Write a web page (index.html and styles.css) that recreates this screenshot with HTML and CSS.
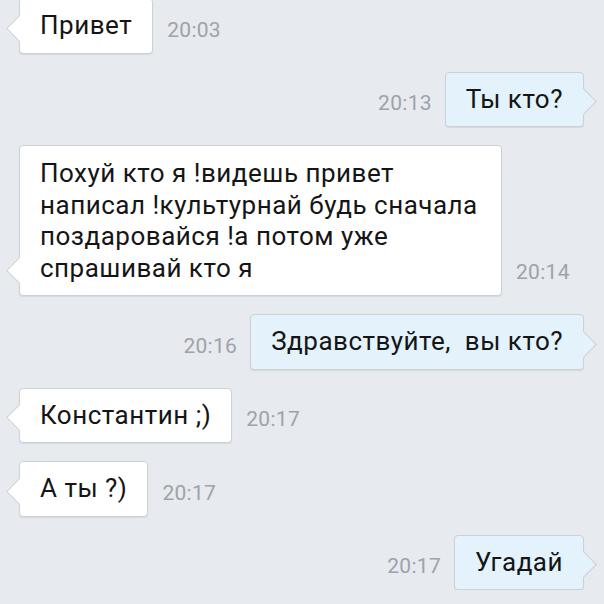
FILE: index.html
```html
<!DOCTYPE html>
<html lang="ru">
<head>
    <meta charset="UTF-8">
    <title>Диалог</title>
    <link rel="stylesheet" href="styles.css">
</head>
<body>
    <div class="chat">
        <div class="row in">
            <div class="bubble">Привет</div>
            <span class="time">20:03</span>
        </div>
        <div class="row out">
            <span class="time">20:13</span>
            <div class="bubble">Ты кто?</div>
        </div>
        <div class="row in">
            <div class="bubble wide">Похуй кто я !видешь привет<br>написал !культурнай будь сначала<br>поздаровайся !а потом уже<br>спрашивай кто я</div>
            <span class="time">20:14</span>
        </div>
        <div class="row out">
            <span class="time">20:16</span>
            <div class="bubble">Здравствуйте,&nbsp; вы кто?</div>
        </div>
        <div class="row in">
            <div class="bubble">Константин ;)</div>
            <span class="time">20:17</span>
        </div>
        <div class="row in">
            <div class="bubble">А ты ?)</div>
            <span class="time">20:17</span>
        </div>
        <div class="row out">
            <span class="time">20:17</span>
            <div class="bubble">Угадай</div>
        </div>
    </div>
</body>
</html>
```

FILE: styles.css
```css
* {
    margin: 0;
    padding: 0;
    box-sizing: border-box;
}
body {
    background: #e7eaee;
    font-family: Roboto, "Noto Sans", sans-serif;
    overflow: hidden;
}
.chat {
    display: flex;
    flex-direction: column;
    gap: 18px;
    margin-top: -2px;
    padding: 0 20px 0 19px;
}
.row {
    display: flex;
    align-items: flex-end;
    gap: 14px;
}
.row.out {
    justify-content: flex-end;
    gap: 13px;
}
.bubble {
    position: relative;
    padding: 11px 20px;
    font-size: 26px;
    line-height: 31.5px;
    letter-spacing: 0.5px;
    color: #151515;
    background: #fff;
    border: 1px solid #ccd1d7;
    border-radius: 4px;
    box-shadow: 0 1px 1px rgba(0, 0, 0, 0.08);
}
.bubble.wide {
    width: 483px;
    white-space: nowrap;
    padding-top: 12px;
}
.bubble::before {
    position: absolute;
    content: "";
    bottom: 15px;
    width: 18px;
    height: 18px;
    background: inherit;
    transform: rotate(45deg);
}
.in .bubble::before {
    left: -10px;
    border-left: 1px solid #ccd1d7;
    border-bottom: 1px solid #ccd1d7;
}
.out .bubble {
    background: #e3f2fb;
}
.out .bubble::before {
    right: -10px;
    border-top: 1px solid #ccd1d7;
    border-right: 1px solid #ccd1d7;
}
.time {
    margin-bottom: 14px;
    font-size: 21px;
    line-height: 20px;
    letter-spacing: 0.3px;
    color: #9ea3aa;
}
```
